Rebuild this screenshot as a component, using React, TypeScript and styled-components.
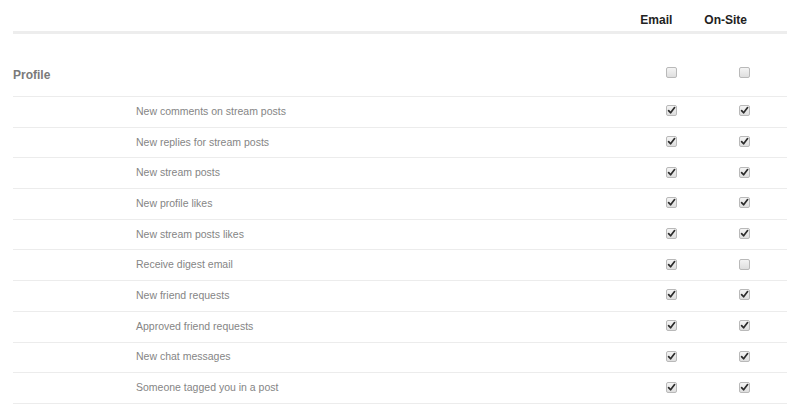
import styled, { createGlobalStyle } from "styled-components";

type Item = {
  label: string;
  email: boolean;
  onSite: boolean;
};

const items: Item[] = [
  { label: "New comments on stream posts", email: true, onSite: true },
  { label: "New replies for stream posts", email: true, onSite: true },
  { label: "New stream posts", email: true, onSite: true },
  { label: "New profile likes", email: true, onSite: true },
  { label: "New stream posts likes", email: true, onSite: true },
  { label: "Receive digest email", email: true, onSite: false },
  { label: "New friend requests", email: true, onSite: true },
  { label: "Approved friend requests", email: true, onSite: true },
  { label: "New chat messages", email: true, onSite: true },
  { label: "Someone tagged you in a post", email: true, onSite: true },
];

const Check = ({ checked }: { checked: boolean }) => (
  <Box>
    {checked && (
      <svg width="9" height="9" viewBox="0 0 9 9">
        <path
          d="M1.6 4.6 L3.6 6.8 L7.6 1.6"
          fill="none"
          stroke="#2b2b2b"
          strokeWidth="1.7"
          strokeLinecap="round"
          strokeLinejoin="round"
        />
      </svg>
    )}
  </Box>
);

const App = () => {
  return (
    <>
      <GlobalStyle />
      <Page>
        <HeaderRow>
          <HeaderLabel>Email</HeaderLabel>
          <HeaderLabel>On-Site</HeaderLabel>
        </HeaderRow>
        <SectionRow>
          <SectionTitle>Profile</SectionTitle>
          <Cell>
            <Check checked={false} />
          </Cell>
          <Cell>
            <Check checked={false} />
          </Cell>
        </SectionRow>
        {items.map((item) => (
          <ItemRow key={item.label}>
            <ItemLabel>{item.label}</ItemLabel>
            <Cell>
              <Check checked={item.email} />
            </Cell>
            <Cell>
              <Check checked={item.onSite} />
            </Cell>
          </ItemRow>
        ))}
      </Page>
    </>
  );
};

export default App;

const GlobalStyle = createGlobalStyle`
  body {
    margin: 0;
    background: #fff;
    font-family: "Liberation Sans", Arial, sans-serif;
  }
`;

const Page = styled.div`
  width: 774px;
  margin-left: 13px;
`;

const HeaderRow = styled.div`
  display: flex;
  justify-content: flex-end;
  align-items: flex-end;
  gap: 32px;
  height: 34px;
  padding-right: 40px;
  box-sizing: border-box;
  padding-bottom: 4px;
  border-bottom: 3px solid #ededed;
`;

const HeaderLabel = styled.div`
  font-size: 12px;
  font-weight: bold;
  color: #222;
  line-height: 14px;
`;

const Row = styled.div`
  display: grid;
  grid-template-columns: 1fr 60px 60px;
  column-gap: 13px;
  padding-right: 12.5px;
  align-items: center;
  box-sizing: border-box;
  border-bottom: 1px solid #ececec;
`;

const SectionRow = styled(Row)`
  height: 63px;
  padding-top: 14px;
`;

const ItemRow = styled(Row)`
  height: 30.7px;
  padding-bottom: 2px;
`;

const SectionTitle = styled.div`
  font-size: 12px;
  font-weight: bold;
  color: #7a7a7a;
  padding-top: 5px;
`;

const ItemLabel = styled.div`
  font-size: 10.5px;
  color: #858585;
  padding-left: 123px;
`;

const Cell = styled.div`
  display: flex;
  justify-content: center;
`;

const Box = styled.span`
  display: inline-flex;
  align-items: center;
  justify-content: center;
  width: 11px;
  height: 11px;
  box-sizing: border-box;
  border: 1px solid #b9b9b9;
  border-radius: 2px;
  background: linear-gradient(#f4f4f4, #dedede);
`;
